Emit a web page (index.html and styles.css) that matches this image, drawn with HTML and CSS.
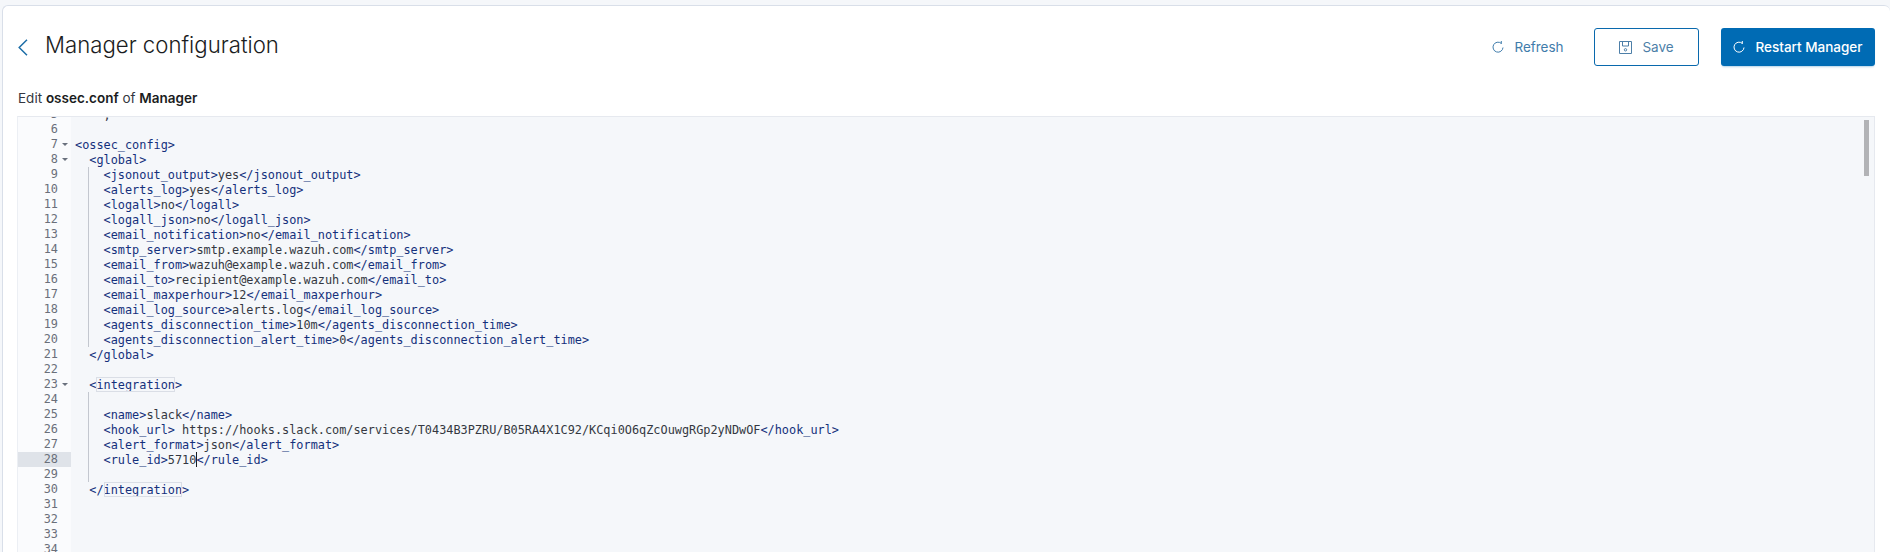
FILE: index.html
```html
<!DOCTYPE html>
<html lang="en">
<head>
<meta charset="utf-8">
<title>Manager configuration</title>
<link rel="stylesheet" href="styles.css">
</head>
<body>
<main class="card">
  <header class="head">
    <div class="title-group">
      <svg class="back" width="10" height="17" viewBox="0 0 10 17"><path d="M9 .8 1.2 8.5 9 16.2" fill="none" stroke="#1f6fa8" stroke-width="1.5"/></svg>
      <h1 class="title">Manager configuration</h1>
    </div>
    <div class="actions">
      <button class="btn btn-text"><svg class="ico" viewBox="0 0 12 12"><path d="M9.3 2.4A5 5 0 1 0 11 6.5" fill="none" stroke="currentColor" stroke-width="1"/><path d="M9.3 0v2.9" fill="none" stroke="currentColor" stroke-width="1"/></svg>Refresh</button>
      <button class="btn btn-outline"><svg class="ico-save" viewBox="0 0 13 13"><path d="M.5.5h12v12H.5zM3.5.5v4.5h6V.5" fill="none" stroke="currentColor" stroke-width="1"/><circle cx="6.5" cy="8.8" r="1.2" fill="none" stroke="currentColor"/></svg>Save</button>
      <button class="btn btn-fill"><svg class="ico" viewBox="0 0 12 12"><path d="M9.3 2.4A5 5 0 1 0 11 6.5" fill="none" stroke="currentColor" stroke-width="1"/><path d="M9.3 0v2.9" fill="none" stroke="currentColor" stroke-width="1"/></svg>Restart Manager</button>
    </div>
  </header>
  <p class="sub">Edit <b>ossec.conf</b> of <b>Manager</b></p>
  <section class="editor">
    <div class="lines">
      <div class="row"><span class="num">5</span><span class="fold"></span><code class="code">    ,</code></div>
      <div class="row"><span class="num">6</span><span class="fold"></span><code class="code"></code></div>
      <div class="row"><span class="num">7</span><span class="fold open"></span><code class="code"><i>&lt;ossec_config&gt;</i></code></div>
      <div class="row"><span class="num">8</span><span class="fold open"></span><code class="code">  <i>&lt;global&gt;</i></code></div>
      <div class="row"><span class="num">9</span><span class="fold"></span><code class="code guide">    <i>&lt;jsonout_output&gt;</i>yes<i>&lt;/jsonout_output&gt;</i></code></div>
      <div class="row"><span class="num">10</span><span class="fold"></span><code class="code guide">    <i>&lt;alerts_log&gt;</i>yes<i>&lt;/alerts_log&gt;</i></code></div>
      <div class="row"><span class="num">11</span><span class="fold"></span><code class="code guide">    <i>&lt;logall&gt;</i>no<i>&lt;/logall&gt;</i></code></div>
      <div class="row"><span class="num">12</span><span class="fold"></span><code class="code guide">    <i>&lt;logall_json&gt;</i>no<i>&lt;/logall_json&gt;</i></code></div>
      <div class="row"><span class="num">13</span><span class="fold"></span><code class="code guide">    <i>&lt;email_notification&gt;</i>no<i>&lt;/email_notification&gt;</i></code></div>
      <div class="row"><span class="num">14</span><span class="fold"></span><code class="code guide">    <i>&lt;smtp_server&gt;</i>smtp.example.wazuh.com<i>&lt;/smtp_server&gt;</i></code></div>
      <div class="row"><span class="num">15</span><span class="fold"></span><code class="code guide">    <i>&lt;email_from&gt;</i>wazuh@example.wazuh.com<i>&lt;/email_from&gt;</i></code></div>
      <div class="row"><span class="num">16</span><span class="fold"></span><code class="code guide">    <i>&lt;email_to&gt;</i>recipient@example.wazuh.com<i>&lt;/email_to&gt;</i></code></div>
      <div class="row"><span class="num">17</span><span class="fold"></span><code class="code guide">    <i>&lt;email_maxperhour&gt;</i>12<i>&lt;/email_maxperhour&gt;</i></code></div>
      <div class="row"><span class="num">18</span><span class="fold"></span><code class="code guide">    <i>&lt;email_log_source&gt;</i>alerts.log<i>&lt;/email_log_source&gt;</i></code></div>
      <div class="row"><span class="num">19</span><span class="fold"></span><code class="code guide">    <i>&lt;agents_disconnection_time&gt;</i>10m<i>&lt;/agents_disconnection_time&gt;</i></code></div>
      <div class="row"><span class="num">20</span><span class="fold"></span><code class="code guide">    <i>&lt;agents_disconnection_alert_time&gt;</i>0<i>&lt;/agents_disconnection_alert_time&gt;</i></code></div>
      <div class="row"><span class="num">21</span><span class="fold"></span><code class="code">  <i>&lt;/global&gt;</i></code></div>
      <div class="row"><span class="num">22</span><span class="fold"></span><code class="code"></code></div>
      <div class="row"><span class="num">23</span><span class="fold open"></span><code class="code">  <i>&lt;<u>integration</u>&gt;</i></code></div>
      <div class="row"><span class="num">24</span><span class="fold"></span><code class="code guide"></code></div>
      <div class="row"><span class="num">25</span><span class="fold"></span><code class="code guide">    <i>&lt;name&gt;</i>slack<i>&lt;/name&gt;</i></code></div>
      <div class="row"><span class="num">26</span><span class="fold"></span><code class="code guide">    <i>&lt;hook_url&gt;</i> https://hooks.slack.com/services/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<i>&lt;/hook_url&gt;</i></code></div>
      <div class="row"><span class="num">27</span><span class="fold"></span><code class="code guide">    <i>&lt;alert_format&gt;</i>json<i>&lt;/alert_format&gt;</i></code></div>
      <div class="row active"><span class="num">28</span><span class="fold"></span><code class="code guide">    <i>&lt;rule_id&gt;</i>5710<b class="caret"></b><i>&lt;/rule_id&gt;</i></code></div>
      <div class="row"><span class="num">29</span><span class="fold"></span><code class="code guide"></code></div>
      <div class="row"><span class="num">30</span><span class="fold"></span><code class="code">  <i>&lt;/<u>integration</u>&gt;</i></code></div>
      <div class="row"><span class="num">31</span><span class="fold"></span><code class="code"></code></div>
      <div class="row"><span class="num">32</span><span class="fold"></span><code class="code"></code></div>
      <div class="row"><span class="num">33</span><span class="fold"></span><code class="code"></code></div>
      <div class="row"><span class="num">34</span><span class="fold"></span><code class="code"></code></div>
    </div>
    <div class="thumb"></div>
  </section>
</main>
</body>
</html>
```
FILE: styles.css
```css
html, body { margin: 0; height: 552px; overflow: hidden; background: #f5f7fa; }
body { padding: 5px 0 0 2px; box-sizing: border-box; font-family: Inter, "Noto Sans", sans-serif; }
.card { height: 547px; box-sizing: border-box; background: #fff; border: 1px solid #d9dfe9; border-right: 0; border-bottom: 0; border-radius: 6px 6px 0 0; padding: 0 15px 0 15px; overflow: hidden; }
.head { display: flex; justify-content: space-between; align-items: center; margin-top: 22px; height: 38px; }
.title-group { display: flex; align-items: center; gap: 17px; }
.back { display: block; margin-top: 0; }
.title { margin: 0; font-size: 22.2px; font-weight: 300; color: #1a1c21; line-height: 30px; margin-top: -5px; }
.actions { display: flex; gap: 22px; align-items: center; }
.btn { height: 38px; box-sizing: border-box; display: flex; align-items: center; justify-content: center; gap: 10px; font: 400 13.5px Inter, sans-serif; border-radius: 3px; border: 1px solid transparent; background: none; padding: 0; }
.ico { width: 12px; height: 12px; flex: none; }
.ico-save { width: 13px; height: 13px; flex: none; }
.btn-text { color: #3f7cab; width: 88px; }
.btn-outline { color: #4d7fa8; border-color: #0969ad; width: 105px; background: #fff; }
.btn-fill { color: #fff; background: #006bb4; width: 154px; font-weight: 500; box-shadow: 0 2px 2px -1px rgba(0,107,180,.3); }
.sub { margin: 22px 0 0; height: 20px; line-height: 20px; font-size: 13.5px; color: #343741; }
.sub b { font-weight: 600; color: #1a1c21; }
.editor { position: relative; margin-top: 8px; height: 440px; background: #f5f7fa; border-top: 1px solid #e6e9ef; border-right: 1px solid #e6e9ef; border-left: 1px solid #eceff4; margin-left: -1px; overflow: hidden; box-sizing: border-box; }
.lines { margin-top: -10px; }
.row { display: flex; height: 15px; line-height: 15px; }
.num { width: 40px; text-align: right; flex: none; font: 11.86px/15px "DejaVu Sans Mono", monospace; color: #6a6f7a; background: #fafbfd; }
.fold { width: 13px; flex: none; position: relative; background: #fafbfd; }
.fold.open::after { content: ""; position: absolute; left: 4px; top: 6px; border: 3px solid transparent; border-top: 3px solid #69707d; border-bottom: 0; }
.active .num, .active .fold { background: #dfe3e9; }
.code { font: 11.86px/15px "DejaVu Sans Mono", monospace; white-space: pre; color: #343741; padding: 1px 0 0 4px; height: 14px; position: relative; }
.code i { font-style: normal; color: #14307c; }
.code u { position: relative; display: inline-block; height: 15px; text-decoration: none; vertical-align: top; }
.code u::before { content: ""; position: absolute; inset: -1px 0 1px 0; box-shadow: inset 0 0 0 1px #dadee6; }
.guide { min-width: 1px; }
.guide::before { content: ""; position: absolute; left: 17px; top: 0; bottom: 0; border-left: 1px solid #c3c7cf; }
.caret { display: inline-block; width: 1px; height: 15px; margin: -1px -1px 0 0; background: #1a1c21; vertical-align: top; }
.thumb { position: absolute; top: 3px; right: 5px; width: 5px; height: 56px; background: #b2b3b6; }
```
